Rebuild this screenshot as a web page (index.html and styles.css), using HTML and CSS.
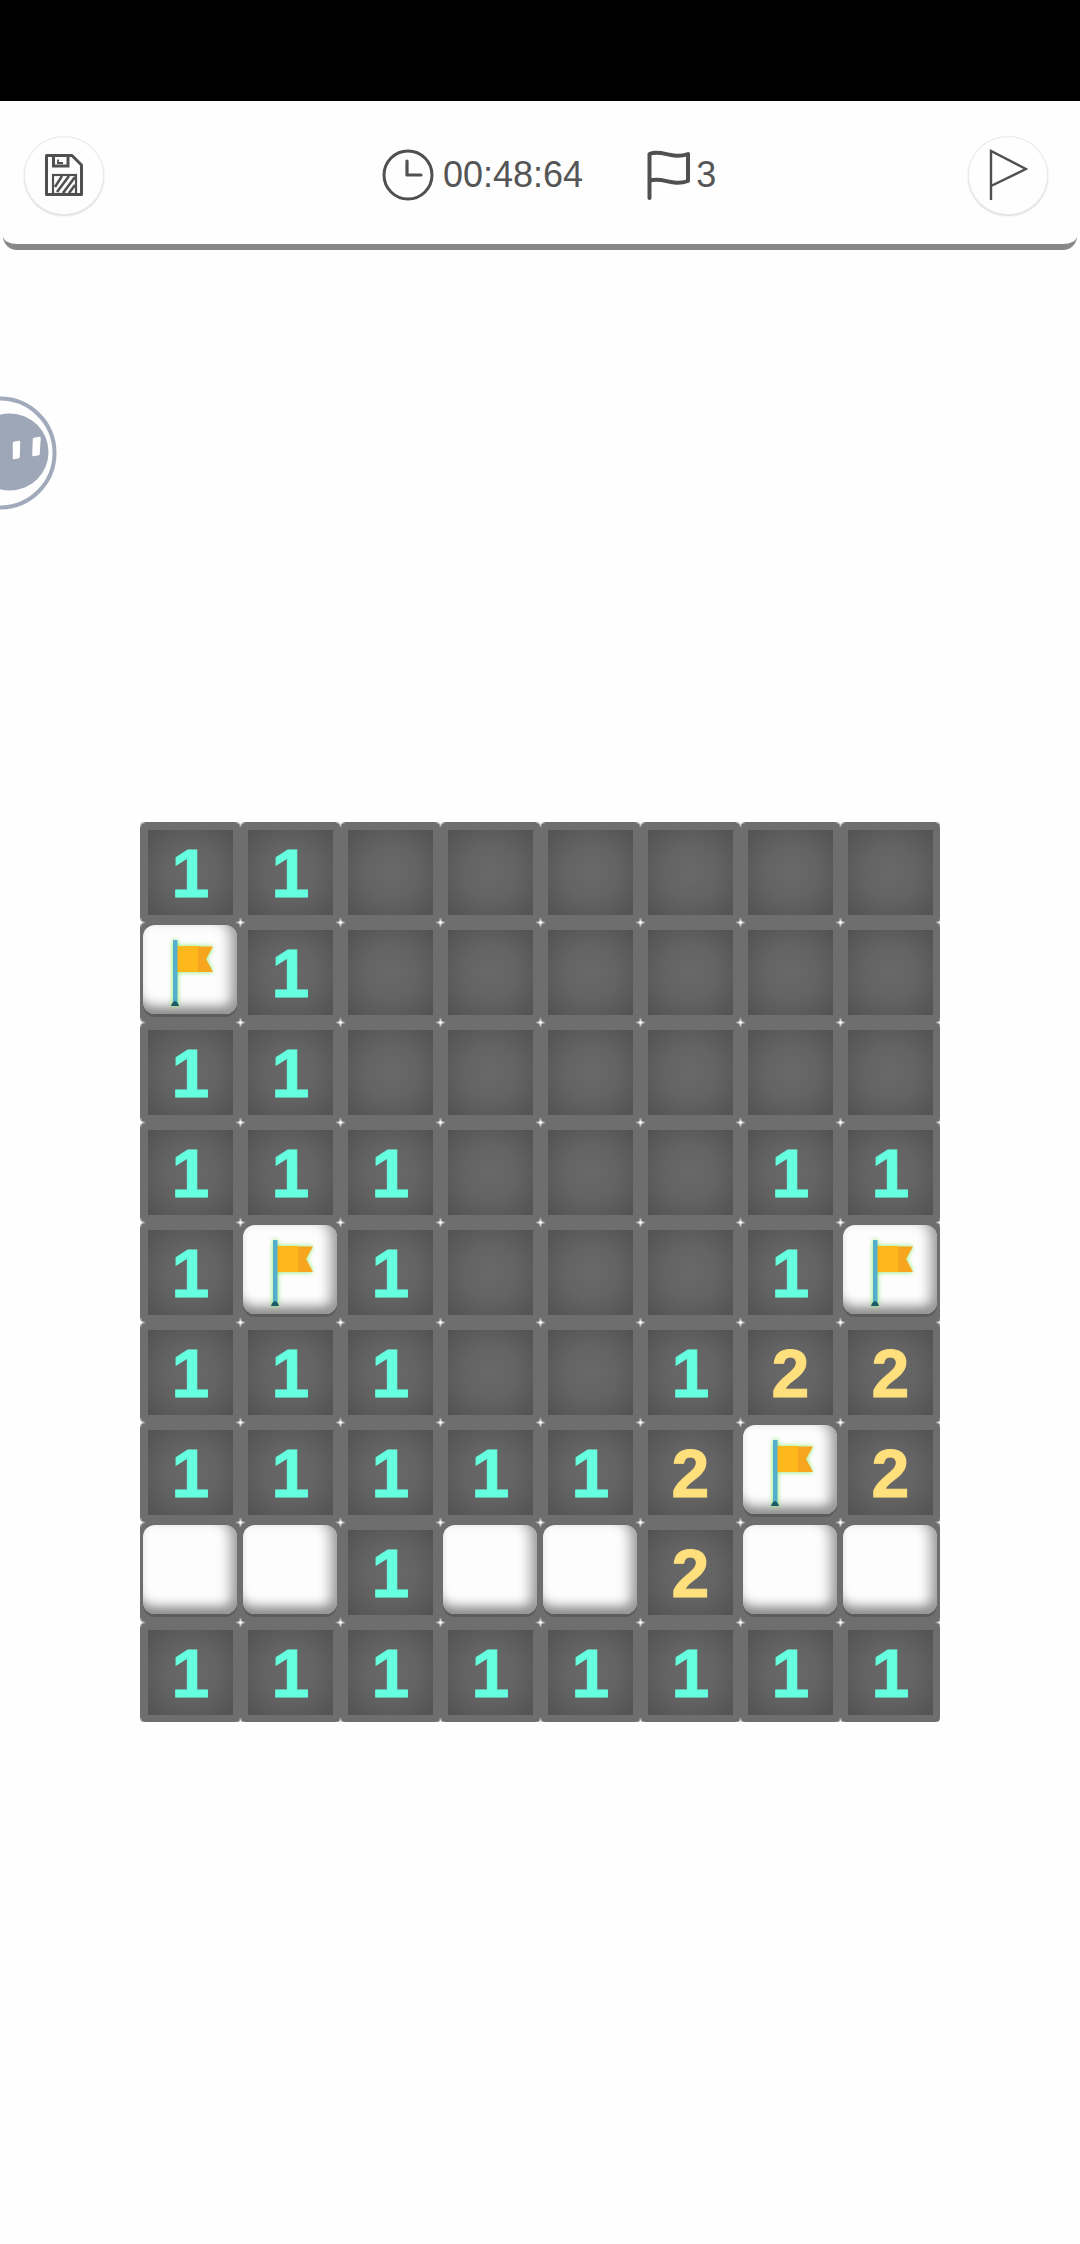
FILE: index.html
```html
<!DOCTYPE html>
<html lang="en">
<head>
<meta charset="utf-8">
<title>Minesweeper</title>
<link rel="stylesheet" href="styles.css">
</head>
<body>
<svg class="defs" width="0" height="0" aria-hidden="true">
  <defs>
    <symbol id="flag" viewBox="0 0 100 100">
      <path d="M36 24H58V50H36Z" fill="#ffb81c"/>
      <path d="M58 24.500H73L66 37L73 50H58Z" fill="#f7a51e"/>
      <rect x="33" y="18" width="4.500" height="64" fill="#55aecb"/>
      <path d="M31 84Q32 80 35 79Q38 80 39 84Z" fill="#1c5a66"/>
    </symbol>
  </defs>
</svg>
<div class="statusbar"></div>
<header class="toolbar">
  <button class="round">
    <svg class="ico-save" viewBox="0 0 38 42" width="38" height="42">
      <path d="M1.5 1.5H27L36.5 11V40.5H1.5Z" fill="none" stroke="#505050" stroke-width="3" stroke-linejoin="round"/>
      <path d="M8.5 2V12H23V2" fill="none" stroke="#505050" stroke-width="3"/>
      <path d="M13 5.5V9H18" fill="none" stroke="#505050" stroke-width="1.8"/>
      <rect x="8" y="21" width="23" height="19" fill="none" stroke="#505050" stroke-width="2.2"/>
      <path d="M10 33L17 22M12 38L24 22M18 39L30 23M24 39L30 31" stroke="#505050" stroke-width="2.6" fill="none"/>
    </svg>
  </button>
  <div class="stats">
    <div class="stat stat-time">
      <svg viewBox="0 0 52 52" width="52" height="52">
        <circle cx="26" cy="26" r="24" fill="none" stroke="#505050" stroke-width="3"/>
        <path d="M25 12V26H39" fill="none" stroke="#505050" stroke-width="3.2" stroke-linecap="round" stroke-linejoin="round"/>
      </svg>
      <span>00:48:64</span>
    </div>
    <div class="stat stat-flags">
      <svg viewBox="0 0 44 50" width="44" height="50">
        <path d="M2.500 48V4C15 -1 25 10 41 4V31C25 37 15 26 2.500 31" fill="none" stroke="#505050" stroke-width="4" stroke-linecap="round" stroke-linejoin="round"/>
      </svg>
      <span>3</span>
    </div>
  </div>
  <button class="round">
    <svg viewBox="0 0 40 52" width="40" height="52">
      <path d="M3 51V2L38 20L3 37" fill="none" stroke="#505050" stroke-width="2.400"/>
    </svg>
  </button>
</header>
<svg class="floater" viewBox="0 0 60 116" width="60" height="116">
  <circle cx="0" cy="57" r="54.500" fill="none" stroke="#a0aaba" stroke-width="4"/>
  <circle cx="10" cy="56" r="38.500" fill="#9da7b8"/>
  <path d="M14 47L19 46L18.500 61L14 62Z" fill="#fff" stroke="#fff" stroke-width="2.500" stroke-linejoin="round"/>
  <path d="M34 43L39.500 42L38.500 58L33.500 59Z" fill="#fff" stroke="#fff" stroke-width="2.500" stroke-linejoin="round"/>
</svg>
<main class="board">
  <div class="cell"><div class="open one">1</div></div>
  <div class="cell"><div class="open one">1</div></div>
  <div class="cell"><div class="open"></div></div>
  <div class="cell"><div class="open"></div></div>
  <div class="cell"><div class="open"></div></div>
  <div class="cell"><div class="open"></div></div>
  <div class="cell"><div class="open"></div></div>
  <div class="cell"><div class="open"></div></div>

  <div class="cell cell-closed"><div class="tile"><svg class="flag"><use href="#flag"/></svg></div></div>
  <div class="cell"><div class="open one">1</div></div>
  <div class="cell"><div class="open"></div></div>
  <div class="cell"><div class="open"></div></div>
  <div class="cell"><div class="open"></div></div>
  <div class="cell"><div class="open"></div></div>
  <div class="cell"><div class="open"></div></div>
  <div class="cell"><div class="open"></div></div>

  <div class="cell"><div class="open one">1</div></div>
  <div class="cell"><div class="open one">1</div></div>
  <div class="cell"><div class="open"></div></div>
  <div class="cell"><div class="open"></div></div>
  <div class="cell"><div class="open"></div></div>
  <div class="cell"><div class="open"></div></div>
  <div class="cell"><div class="open"></div></div>
  <div class="cell"><div class="open"></div></div>

  <div class="cell"><div class="open one">1</div></div>
  <div class="cell"><div class="open one">1</div></div>
  <div class="cell"><div class="open one">1</div></div>
  <div class="cell"><div class="open"></div></div>
  <div class="cell"><div class="open"></div></div>
  <div class="cell"><div class="open"></div></div>
  <div class="cell"><div class="open one">1</div></div>
  <div class="cell"><div class="open one">1</div></div>

  <div class="cell"><div class="open one">1</div></div>
  <div class="cell cell-closed"><div class="tile"><svg class="flag"><use href="#flag"/></svg></div></div>
  <div class="cell"><div class="open one">1</div></div>
  <div class="cell"><div class="open"></div></div>
  <div class="cell"><div class="open"></div></div>
  <div class="cell"><div class="open"></div></div>
  <div class="cell"><div class="open one">1</div></div>
  <div class="cell cell-closed"><div class="tile"><svg class="flag"><use href="#flag"/></svg></div></div>

  <div class="cell"><div class="open one">1</div></div>
  <div class="cell"><div class="open one">1</div></div>
  <div class="cell"><div class="open one">1</div></div>
  <div class="cell"><div class="open"></div></div>
  <div class="cell"><div class="open"></div></div>
  <div class="cell"><div class="open one">1</div></div>
  <div class="cell"><div class="open two">2</div></div>
  <div class="cell"><div class="open two">2</div></div>

  <div class="cell"><div class="open one">1</div></div>
  <div class="cell"><div class="open one">1</div></div>
  <div class="cell"><div class="open one">1</div></div>
  <div class="cell"><div class="open one">1</div></div>
  <div class="cell"><div class="open one">1</div></div>
  <div class="cell"><div class="open two">2</div></div>
  <div class="cell cell-closed"><div class="tile"><svg class="flag"><use href="#flag"/></svg></div></div>
  <div class="cell"><div class="open two">2</div></div>

  <div class="cell cell-closed"><div class="tile"></div></div>
  <div class="cell cell-closed"><div class="tile"></div></div>
  <div class="cell"><div class="open one">1</div></div>
  <div class="cell cell-closed"><div class="tile"></div></div>
  <div class="cell cell-closed"><div class="tile"></div></div>
  <div class="cell"><div class="open two">2</div></div>
  <div class="cell cell-closed"><div class="tile"></div></div>
  <div class="cell cell-closed"><div class="tile"></div></div>

  <div class="cell"><div class="open one">1</div></div>
  <div class="cell"><div class="open one">1</div></div>
  <div class="cell"><div class="open one">1</div></div>
  <div class="cell"><div class="open one">1</div></div>
  <div class="cell"><div class="open one">1</div></div>
  <div class="cell"><div class="open one">1</div></div>
  <div class="cell"><div class="open one">1</div></div>
  <div class="cell"><div class="open one">1</div></div>

  <svg class="sparkles" width="800" height="900" aria-hidden="true">
    <defs>
      <pattern id="spark" x="0.500" y="0.500" width="100" height="100" patternUnits="userSpaceOnUse">
        <path d="M0 -5L1 -1L5 0L1 1L0 5L-1 1L-5 0L-1 -1Z" fill="#fff"/>
        <path d="M0 -5L1 -1L5 0L1 1L0 5L-1 1L-5 0L-1 -1Z" transform="translate(100 0)" fill="#fff"/>
        <path d="M0 -5L1 -1L5 0L1 1L0 5L-1 1L-5 0L-1 -1Z" transform="translate(0 100)" fill="#fff"/>
        <path d="M0 -5L1 -1L5 0L1 1L0 5L-1 1L-5 0L-1 -1Z" transform="translate(100 100)" fill="#fff"/>
      </pattern>
    </defs>
    <rect width="800" height="900" fill="url(#spark)"/>
  </svg>
</main>
</body>
</html>
```
FILE: styles.css
```css
* {
  box-sizing: border-box;
}

html,
body {
  margin: 0;
  padding: 0;
  background: #fefefe;
}

body {
  position: relative;
  width: 1080px;
  height: 2244px;
  overflow: hidden;
  font-family: "Liberation Sans", Arial, sans-serif;
}

.defs {
  position: absolute;
}

.statusbar {
  height: 101px;
  background: #000;
}

.toolbar {
  display: flex;
  align-items: center;
  height: 149px;
  margin: 0 3px;
  padding: 5px 29px 0 21px;
  background: #fefefe;
  border-bottom: 6px solid #878787;
  border-radius: 0 0 14px 14px;
}

.round {
  display: flex;
  align-items: center;
  justify-content: center;
  flex: none;
  width: 80px;
  height: 79px;
  padding: 0;
  background: #fefefe;
  border: 1px solid #ececec;
  border-radius: 50%;
  box-shadow: 0 1px 2px #d4d4d4;
}

.stats {
  display: flex;
  align-items: center;
  gap: 64px;
  margin: 0 auto 0 278px;
  color: #555;
  font-size: 36px;
}

.stat {
  display: flex;
  align-items: center;
}

.stat-time {
  gap: 9px;
}

.stat-flags {
  gap: 5px;
}

.floater {
  position: absolute;
  left: 0;
  top: 396px;
}

.board {
  position: relative;
  display: grid;
  grid-template-columns: repeat(8, 100px);
  grid-auto-rows: 100px;
  width: 800px;
  height: 900px;
  margin: 572px auto 0;
  overflow: hidden;
  background: #6e6e6e;
  border-radius: 4px;
}

.cell {
  padding: 8px 7px 7px 8px;
}

.cell-closed {
  padding: 3px 3px 8px 3px;
}

.open {
  display: flex;
  align-items: center;
  justify-content: center;
  height: 100%;
  background: radial-gradient(circle, #696969 0%, #636363 45%, #525252 100%);
  font-size: 68px;
  font-weight: 700;
  line-height: 1;
  -webkit-text-stroke: 1px currentColor;
}

.one {
  color: #66ffe0;
}

.two {
  color: #ffe07c;
}

.tile {
  display: flow-root;
  height: 100%;
  background: #fdfdfd;
  border-radius: 12px;
  box-shadow:
    inset -13px 0 13px -7px #9a9a9a,
    inset 0 -13px 12px -6px #848484,
    0 3px 0 #5c5c5c;
}

.flag {
  display: block;
  width: 100px;
  height: 100px;
  margin: -3px 0 0 -3px;
  filter: drop-shadow(0 0 2.500px #86e85f);
}

.sparkles {
  position: absolute;
  left: 0;
  top: 0;
}
```
